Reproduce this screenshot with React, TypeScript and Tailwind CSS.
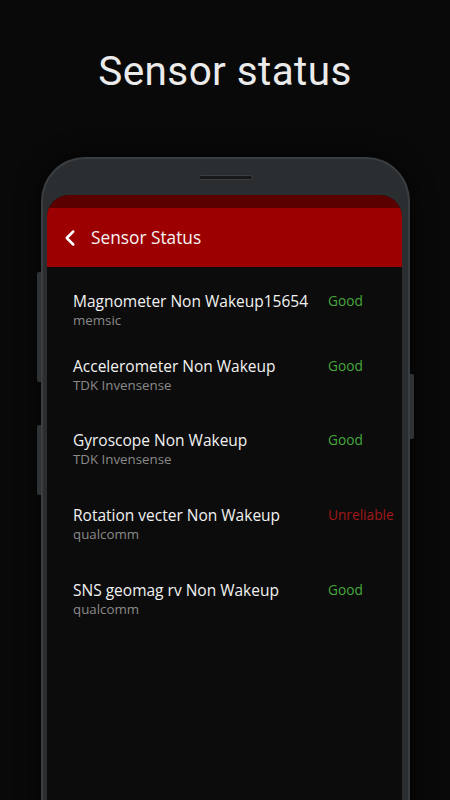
import { ChevronLeft } from 'lucide-react';

interface Sensor {
  name: string;
  vendor: string;
  status: 'Good' | 'Unreliable';
  gap: string;
}

const sensors: Sensor[] = [
  { name: 'Magnometer Non Wakeup15654', vendor: 'memsic', status: 'Good', gap: 'mt-[24px]' },
  { name: 'Accelerometer Non Wakeup', vendor: 'TDK Invensense', status: 'Good', gap: 'mt-[27px]' },
  { name: 'Gyroscope Non Wakeup', vendor: 'TDK Invensense', status: 'Good', gap: 'mt-[36px]' },
  { name: 'Rotation vecter Non Wakeup', vendor: 'qualcomm', status: 'Unreliable', gap: 'mt-[37px]' },
  { name: 'SNS geomag rv Non Wakeup', vendor: 'qualcomm', status: 'Good', gap: 'mt-[37px]' },
];

function SensorRow({ sensor }: { sensor: Sensor }) {
  const good = sensor.status === 'Good';
  return (
    <div className={`flex items-start pl-[26px] ${sensor.gap}`}>
      <div className="w-[255px] shrink-0">
        <p className="text-[15.5px] leading-[20px] text-[#f2f2f2]">{sensor.name}</p>
        <p className="text-[13.3px] leading-[18px] text-[#8a8a8a]">{sensor.vendor}</p>
      </div>
      <span
        className={`text-[13.7px] leading-[20px] whitespace-nowrap ${
          good ? 'text-[#46a83c]' : 'text-[#a31818]'
        }`}
      >
        {sensor.status}
      </span>
    </div>
  );
}

export default function App() {
  return (
    <div className="w-[450px] h-[800px] overflow-hidden bg-[#090909] flex flex-col items-center">
      <h1
        className="mt-[47px] text-[40.5px] leading-[48px] text-[#ebebeb] tracking-[0.4px]"
        style={{ fontFamily: 'Roboto, "Open Sans", sans-serif' }}
      >
        Sensor status
      </h1>

      {/* phone */}
      <div className="relative mt-[62px] w-[369px] h-[700px] ml-[1px] rounded-t-[44px] bg-[#2b2e30] border-x-[2px] border-t-[2px] border-[#3a3e41] shadow-[0_0_24px_rgba(0,0,0,0.8)]">
        {/* side buttons */}
        <div className="absolute left-[-6px] top-[113px] w-[4px] h-[110px] rounded-l-[2px] bg-[#2f3335]" />
        <div className="absolute left-[-6px] top-[266px] w-[4px] h-[70px] rounded-l-[2px] bg-[#2f3335]" />
        <div className="absolute right-[-6px] top-[215px] w-[4px] h-[65px] rounded-r-[2px] bg-[#2f3335]" />

        <div className="flex justify-center pt-[16px]">
          <div className="w-[55px] h-[5px] rounded-full bg-[#161819] border border-[#3c3f42]" />
        </div>

        <div
          className="mt-[15px] ml-[4px] mr-[6px] h-[650px] rounded-t-[22px] overflow-hidden bg-[#0c0c0c]"
          style={{ fontFamily: '"Open Sans", "Noto Sans", sans-serif' }}
        >
          <div className="h-[13px] bg-[#5a0000]" />
          <div className="h-[59px] bg-[#9c0000] flex items-center pl-[10px]">
            <ChevronLeft className="w-[26px] h-[26px] text-white" strokeWidth={2.3} />
            <span className="ml-[8px] text-[17.3px] leading-[24px] text-[#f5f5f5]">Sensor Status</span>
          </div>

          <div>
            {sensors.map(s => (
              <SensorRow key={s.name} sensor={s} />
            ))}
          </div>
        </div>
      </div>
    </div>
  );
}
